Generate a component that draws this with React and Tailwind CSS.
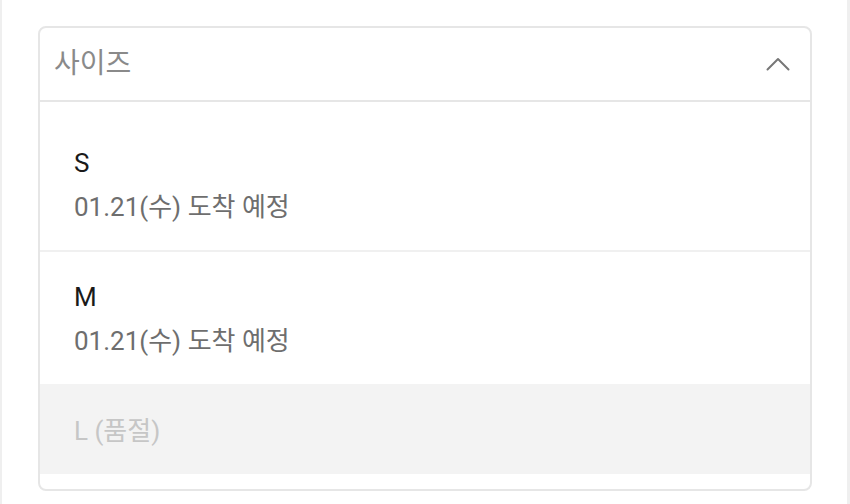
export default function App() {
  const font = { fontFamily: '"Roboto", "Noto Sans CJK KR", sans-serif' };
  return (
    <div
      className="w-[850px] h-[504px] bg-white border-l-2 border-r-[3px] border-[#efefef] pt-[26px] pl-[36px] pr-[35px]"
      style={font}
    >
      <div className="border-2 border-[#e6e6e6] rounded-[8px] overflow-hidden">
        <div className="h-[74px] flex items-center justify-between pl-[14px] pr-[20px] border-b-2 border-[#e6e6e6]">
          <span className="text-[28px] leading-[32px] text-[#8a8a8a]">사이즈</span>
          <svg width="24" height="14" viewBox="0 0 24 14" fill="none">
            <path d="M1.5 12.5 L12 2 L22.5 12.5" stroke="#777" strokeWidth="2" strokeLinecap="round" strokeLinejoin="round" />
          </svg>
        </div>
        <div className="pt-[16px] pb-[15px]">
          <div className="pt-[30px] pb-[28px] pl-[34px] flex flex-col gap-[14px] border-b-2 border-[#f0f0f0]">
            <span className="text-[26px] leading-[30px] text-[#1a1a1a]">S</span>
            <span className="text-[26px] leading-[30px] text-[#6e6e6e]">01.21(수) 도착 예정</span>
          </div>
          <div className="pt-[30px] pb-[28px] pl-[34px] flex flex-col gap-[14px]">
            <span className="text-[26px] leading-[30px] text-[#1a1a1a]">M</span>
            <span className="text-[26px] leading-[30px] text-[#6e6e6e]">01.21(수) 도착 예정</span>
          </div>
          <div className="pt-[32px] pb-[27px] pl-[34px] bg-[#f3f3f3]">
            <span className="text-[26px] leading-[30px] text-[#c6c6c6]">L (품절)</span>
          </div>
        </div>
      </div>
    </div>
  );
}
